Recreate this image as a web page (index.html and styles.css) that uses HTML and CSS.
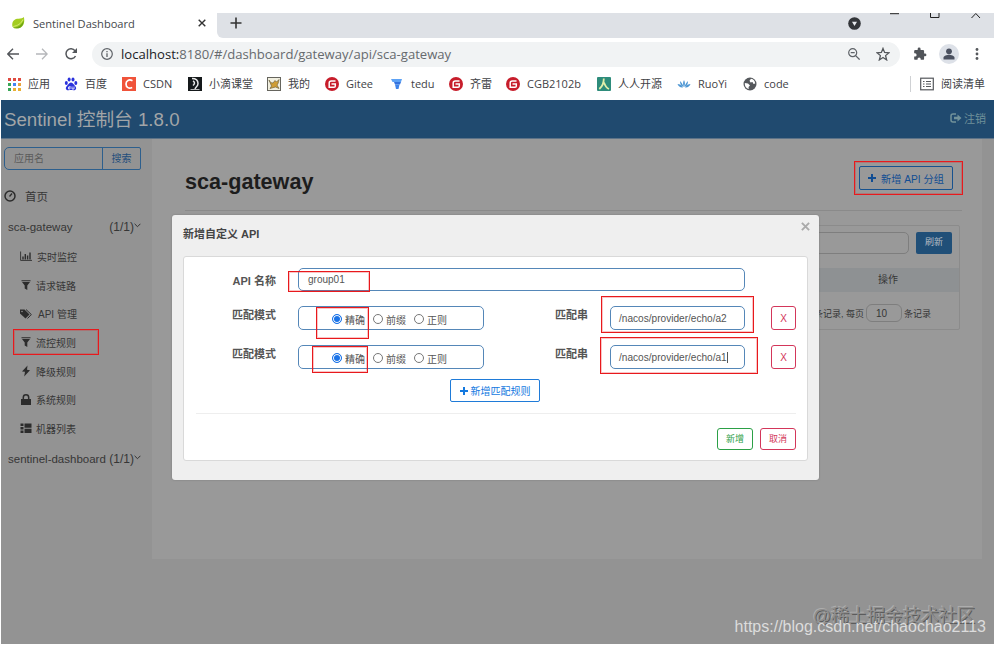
FILE: index.html
```html
<!DOCTYPE html>
<html lang="zh-CN">
<head>
  <meta charset="UTF-8" />
  <title>Sentinel Dashboard</title>
  <link rel="stylesheet" href="styles.css">
</head>
<body>
  <div class="browser">
    <div class="tab-strip">
      <div class="tab">
        <svg class="leaf" viewBox="0 0 16 16"><path d="M1 12C0 5 4 3 8 3c3 0 5-1 6-2 1 3 1 8-2 11-3 3-7 2-9 2z" fill="#a4cd20"/><path d="M2 13c5 0 9-2 12-8 0 5-3 9-7 9-2 0-4 0-5-1z" fill="#6ea514"/><path d="M2 12c5-1 9-3 11-8" stroke="#d8ef7c" fill="none"/></svg>
        <span class="tab-title">Sentinel Dashboard</span>
        <svg class="tab-close" viewBox="0 0 8 8"><path d="M.7.7l6.6 6.6M7.3.7L.7 7.3" stroke="#333" stroke-width="1.4"/></svg>
      </div>
      <div class="strip-rest">
        <svg class="new-tab" viewBox="0 0 12 12"><path d="M6 .5v11M.5 6h11" stroke="#333" stroke-width="1.6"/></svg>
        <svg class="tab-search" viewBox="0 0 13 13"><circle cx="6.5" cy="6.5" r="6.3" fill="#333539"/><path d="M4 4.8h5L6.5 9z" fill="#e8eaee"/></svg>
        <svg class="win-buttons" viewBox="0 0 94 6"><path d="M1 .7h9M41.5 0v4.5h8.500V0M82.500 5l4.300-4.500L91 5" fill="none" stroke="#222" stroke-width="1"/></svg>
      </div>
    </div>

    <div class="toolbar">
      <svg class="nav" viewBox="0 0 12 12"><path d="M12 6H1M6 .8L.8 6 6 11.200" fill="none" stroke="#53565a" stroke-width="1.400"/></svg>
      <svg class="nav" viewBox="0 0 12 12"><path d="M0 6h11M6 .8L11.200 6 6 11.200" fill="none" stroke="#b5b7ba" stroke-width="1.300"/></svg>
      <svg class="nav" viewBox="0 0 12 12"><path d="M10.500 8A5 5 0 1 1 10 2.700" fill="none" stroke="#53565a" stroke-width="1.500"/><path d="M12 0v5H7z" fill="#53565a"/></svg>
      <div class="omnibox">
        <svg class="info" viewBox="0 0 12 12"><circle cx="6" cy="6" r="5.300" fill="none" stroke="#5f6368" stroke-width="1.200"/><path d="M6 5.200V9M6 3v1.300" stroke="#5f6368" stroke-width="1.300"/></svg>
        <span class="url"><b>localhost:</b>8180/#/dashboard/gateway/api/sca-gateway</span>
        <svg class="zoom" viewBox="0 0 12 12"><circle cx="4.700" cy="4.700" r="4" fill="none" stroke="#5f6368" stroke-width="1.200"/><path d="M7.600 7.600l4 4M2.700 4.700h4" stroke="#5f6368" stroke-width="1.300"/></svg>
        <svg class="star" viewBox="0 0 13 13"><path d="M6.500 1.300l1.500 3.800 4 .3-3.100 2.600 1 4-3.400-2.200L3.100 12l1-4L1 5.400l4-.3z" fill="none" stroke="#55585c" stroke-width="1.200"/></svg>
      </div>
      <svg class="puzzle" viewBox="0 0 24 24"><path d="M20.500 11H19V7a2 2 0 0 0-2-2h-4V3.500a2.500 2.500 0 0 0-5 0V5H4a2 2 0 0 0-2 2v3.800h1.500a2.700 2.700 0 0 1 0 5.400H2V20a2 2 0 0 0 2 2h3.800v-1.500a2.700 2.700 0 0 1 5.400 0V22H17a2 2 0 0 0 2-2v-4h1.500a2.500 2.500 0 0 0 0-5z" fill="#515459"/></svg>
      <svg class="avatar" viewBox="0 0 20 20"><circle cx="10" cy="10" r="10" fill="#dde1e8"/><circle cx="10" cy="7.300" r="2.900" fill="#4b5160"/><path d="M4.500 15.500v-1.700c0-2 3.500-3 5.500-3s5.500 1 5.500 3v1.700z" fill="#4b5160"/></svg>
      <svg class="dots" viewBox="0 0 4 12"><g fill="#55585c"><circle cx="2" cy="1.500" r="1.400"/><circle cx="2" cy="6" r="1.400"/><circle cx="2" cy="10.500" r="1.400"/></g></svg>
    </div>

    <div class="bookmarks">
      <div class="bm"><svg viewBox="0 0 14 14"><g stroke-width="3" stroke-dasharray="3 2"><path d="M1 2.500h13" stroke="#e04a3f"/><path d="M1 7.500h3" stroke="#3aa757"/><path d="M6 7.500h3" stroke="#4285f4"/><path d="M11 7.500h3" stroke="#e8a33d"/><path d="M1 12.500h3" stroke="#3aa757"/><path d="M6 12.500h8" stroke="#eab035"/></g></svg><span>应用</span></div>
      <div class="bm"><svg viewBox="0 0 14 14"><g fill="#2b32dc"><ellipse cx="2.300" cy="6" rx="1.500" ry="2"/><ellipse cx="5.100" cy="2.500" rx="1.500" ry="2"/><ellipse cx="9" cy="2.500" rx="1.500" ry="2"/><ellipse cx="11.800" cy="6" rx="1.500" ry="2"/><path d="M7 5.500c2 0 3 2.500 4.500 4 1.500 2 .3 4-2 3.800-2-.3-3-.3-5 0-2.300.2-3.500-1.800-2-3.800C4 8 5 5.500 7 5.500z"/></g><path d="M6 9v3H4.500v-2H6M8 9.500V12h2V9.500" stroke="#fff" stroke-width=".8" fill="none"/></svg><span>百度</span></div>
      <div class="bm"><svg viewBox="0 0 14 14"><rect width="14" height="14" fill="#f0533a"/><path d="M10.500 3.700C7 2 4 3.500 4 7s3 5 6.200 3.500" fill="none" stroke="#fff" stroke-width="1.700"/></svg><span>CSDN</span></div>
      <div class="bm"><svg viewBox="0 0 14 14"><rect width="14" height="14" fill="#15191b"/><path d="M4 1.500c3 0 6 1 6 5 0 3-2 3-3 5.500M5 4c2 1 2 3 0 4.500" fill="none" stroke="#e9e9e9" stroke-width="1.500"/><path d="M2.500 12.500h9" stroke="#ddd" stroke-width=".8"/></svg><span>小滴课堂</span></div>
      <div class="bm"><svg viewBox="0 0 14 14"><rect x=".5" y=".5" width="13" height="13" fill="#f1efdf" stroke="#66655e"/><path d="M2 3c1 2 2 3 4 3l2-2.500L9.500 5l2.500-2.500c-.5 3-1 4.500-2 5.500l2 3.500-3.500-1.500L3 11.500 4.500 9z" fill="#cf9d35" stroke="#5f5635" stroke-width=".6"/></svg><span>我的</span></div>
      <div class="bm"><svg viewBox="0 0 14 14"><circle cx="7" cy="7" r="7" fill="#c71d2b"/><path d="M10.500 4H6.300Q4.200 4 4.200 6v4.200H9q1.300 0 1.300-1.300V7H6.500" fill="none" stroke="#fff" stroke-width="1.500"/></svg><span>Gitee</span></div>
      <div class="bm"><svg viewBox="0 0 14 14"><path d="M1 2h11L11 5H2.500z" fill="#5da2f5"/><path d="M4 5h7l-1 2.500H5z" fill="#3472dd"/><path d="M5 7.500h4.500L8.500 12H6z" fill="#3d83ea"/></svg><span>tedu</span></div>
      <div class="bm"><svg viewBox="0 0 14 14"><circle cx="7" cy="7" r="7" fill="#c71d2b"/><path d="M10.500 4H6.300Q4.200 4 4.200 6v4.200H9q1.300 0 1.300-1.300V7H6.500" fill="none" stroke="#fff" stroke-width="1.500"/></svg><span>齐雷</span></div>
      <div class="bm"><svg viewBox="0 0 14 14"><circle cx="7" cy="7" r="7" fill="#c71d2b"/><path d="M10.500 4H6.300Q4.200 4 4.200 6v4.200H9q1.300 0 1.300-1.300V7H6.500" fill="none" stroke="#fff" stroke-width="1.500"/></svg><span>CGB2102b</span></div>
      <div class="bm"><svg viewBox="0 0 14 14"><rect width="14" height="14" rx="1" fill="#2e8c7b"/><path d="M6.800 1.500c0 4.500-1.500 8-4.500 10.500M7 5.500c1 3 2.500 5.500 5 6.500" fill="none" stroke="#e1efaa" stroke-width="1.800"/></svg><span>人人开源</span></div>
      <div class="bm"><svg viewBox="0 0 14 14"><g fill="#4d96d3"><path d="M7 3c1.500 3 1 5 0 7-1-2-1.500-4 0-7zM3 4c2 2 3 4 3.500 6C4 9 3 7 3 4zM11 4c0 3-1 5-3.500 6C8 8 9 6 11 4zM.5 7c2 0 4 1 5.500 3.500C3.500 11 1.500 9.500.5 7zM13.500 7c-1 2.500-3 4-5.500 3.500C9.500 8 11.500 7 13.500 7z"/></g></svg><span>RuoYi</span></div>
      <div class="bm"><svg viewBox="0 0 14 14"><circle cx="7" cy="7" r="6.500" fill="#55585c"/><path d="M1.800 6l3.200.5 2 2-1.500 1.500.3 2C3 11.500 1.600 9 1.800 6zM8 1.800l-1.500 2 1 1.700 2-.5 1 2 1.700-.5C12 4 10.500 2.200 8 1.800z" fill="#fff"/></svg><span>code</span></div>
      <div class="bm reading"><svg viewBox="0 0 14 14"><rect x=".7" y="1.200" width="12.600" height="11.600" fill="none" stroke="#55585c" stroke-width="1.200"/><path d="M3 4.500h1.500M6 4.500h5M3 7h1.500M6 7h5M3 9.500h1.500M6 9.500h5" stroke="#55585c"/></svg><span>阅读清单</span></div>
    </div>

    <div class="app">
      <div class="app-header">
        <span class="brand">Sentinel 控制台 1.8.0</span>
        <span class="logout"><svg viewBox="0 0 12 10"><path d="M6 1H3Q1 1 1 3v4q0 2 2 2h3" fill="none" stroke="currentColor" stroke-width="1.500"/><path d="M4 3.700h3.500V1.500L11.500 5 7.500 8.500V6.300H4z" fill="currentColor"/></svg>注销</span>
      </div>

      <div class="app-body">
        <div class="sidebar">
          <div class="search"><span class="search-input">应用名</span><span class="search-button">搜索</span></div>
          <div class="home"><svg viewBox="0 0 12 12"><circle cx="6" cy="6" r="5" fill="none" stroke="#2c2c2c" stroke-width="1.500"/><path d="M5.500 6.500L8 3.500" stroke="#2c2c2c" stroke-width="1.300"/></svg>首页</div>
          <div class="app-name"><span>sca-gateway</span><span>(1/1)<svg viewBox="0 0 7 5"><path d="M.6.800L3.500 3.700 6.400.8" fill="none" stroke="#333"/></svg></span></div>
          <div class="menu">
            <div class="item"><svg viewBox="0 0 12 12"><path d="M.6 1.500V10.400H12" fill="none" stroke="#2c2c2c" stroke-width=".9"/><path d="M3 9.500V6.500M5.300 9.500V4M7.600 9.500V5.500M10 9.500V2.500" stroke="#2c2c2c" stroke-width="1.400"/></svg>实时监控</div>
            <div class="item filter"><svg viewBox="0 0 12 12"><path d="M1.500 1.200h9v1h-9zM2 3h8L7.300 6.500V11L4.700 9.500v-3z" fill="#2c2c2c"/></svg>请求链路</div>
            <div class="item tags"><svg viewBox="0 0 12 12"><path d="M0 1.500h4.500l5 5L5.500 10.500 0 5.500z" fill="#2c2c2c"/><circle cx="2" cy="3.500" r=".8" fill="#929292"/><path d="M6 1.500l5.300 5-3.800 4" fill="none" stroke="#2c2c2c"/></svg>API 管理</div>
            <div class="item filter"><svg viewBox="0 0 12 12"><path d="M1.500 1.200h9v1h-9zM2 3h8L7.300 6.500V11L4.700 9.500v-3z" fill="#2c2c2c"/></svg>流控规则<i class="mark mark-menu"></i></div>
            <div class="item filter"><svg viewBox="0 0 12 12"><path d="M7.500.5L2 6.500l3 .3L4.200 11.500 10 5.200l-3-.4z" fill="#2c2c2c"/></svg>降级规则</div>
            <div class="item filter"><svg viewBox="0 0 12 12"><path d="M1 5h10v6H1z" fill="#2c2c2c"/><path d="M3.300 5V3.500a2.700 2.700 0 0 1 5.400 0V5" fill="none" stroke="#2c2c2c" stroke-width="1.500"/></svg>系统规则</div>
            <div class="item filter"><svg viewBox="0 0 12 12"><path d="M.5 1.500h3v2.500h-3zM4.500 1.500h7v4.300h-7zM.5 5h3v2.500h-3zM.5 8.500h3V11h-3zM4.500 6.800h7V11h-7z" fill="#2c2c2c"/></svg>机器列表</div>
          </div>
          <div class="app-name"><span>sentinel-dashboard</span><span>(1/1)<svg viewBox="0 0 7 5"><path d="M.6.800L3.500 3.700 6.400.8" fill="none" stroke="#333"/></svg></span></div>
        </div>

        <div class="content">
          <div class="page-head">
            <h1>sca-gateway</h1>
            <div class="new-group"><svg viewBox="0 0 8 8"><path d="M4 0v8M0 4h8" stroke="currentColor" stroke-width="2"/></svg>新增 API 分组<i class="mark mark-group"></i></div>
          </div>
          <div class="table-card">
            <div class="card-tools"><span class="filter-input"></span><span class="refresh">刷新</span></div>
            <div class="thead">操作</div>
            <div class="pager">条记录, 每页 <span class="page-size">10</span> 条记录</div>
          </div>
        </div>
      </div>

      <div class="modal">
        <div class="modal-head"><span>新增自定义 API</span><svg class="modal-close" viewBox="0 0 8 8"><path d="M.8.800l6.400 6.400M7.200.8L.8 7.200" stroke="#aaa" stroke-width="1.700"/></svg></div>
        <div class="form">
          <div class="row name-row">
            <label>API 名称</label>
            <div class="field field-name">group01<i class="mark mark-name"></i></div>
          </div>
          <div class="row">
            <label>匹配模式</label>
            <div class="field radios"><i class="radio on"></i><span>精确</span><i class="radio"></i><span>前缀</span><i class="radio"></i><span>正则</span><i class="mark mark-mode1"></i></div>
            <label class="label-str">匹配串</label>
            <div class="field field-str">/nacos/provider/echo/a2<i class="mark mark-str1"></i></div>
            <span class="btn btn-x">X</span>
          </div>
          <div class="row">
            <label>匹配模式</label>
            <div class="field radios"><i class="radio on"></i><span>精确</span><i class="radio"></i><span>前缀</span><i class="radio"></i><span>正则</span><i class="mark mark-mode2"></i></div>
            <label class="label-str">匹配串</label>
            <div class="field field-str">/nacos/provider/echo/a1<i class="caret"></i><i class="mark mark-str2"></i></div>
            <span class="btn btn-x">X</span>
          </div>
          <div class="add-rule"><svg viewBox="0 0 8 8"><path d="M4 0v8M0 4h8" stroke="currentColor" stroke-width="2"/></svg>新增匹配规则</div>
          <div class="form-foot"><span class="btn btn-ok">新增</span><span class="btn btn-cancel">取消</span></div>
        </div>
      </div>

      <div class="watermark community">@稀土掘金技术社区</div>
      <div class="watermark blog">https://blog.csdn.net/chaochao2113</div>
    </div>
  </div>
</body>
</html>
```

FILE: styles.css
```css
* {
  box-sizing: border-box;
}

body {
  margin: 0;
  background: #fff;
  font-family: "Liberation Sans", "Noto Sans CJK SC", sans-serif;
  font-size: 10px;
  overflow: hidden;
}

svg {
  display: block;
  flex: none;
}

.browser {
  width: 993px;
  height: 644px;
  margin-left: 1px;
  padding-top: 13px;
  display: flex;
  flex-direction: column;
}

/* browser chrome */
.tab-strip {
  display: flex;
  height: 25px;
  flex: none;
}

.tab {
  width: 216px;
  display: flex;
  align-items: center;
  padding: 0 11px 5px 10px;
  font-family: "Open Sans", sans-serif;
  font-size: 11.1px;
  color: #45484c;
}

.leaf {
  width: 15px;
  height: 14px;
}

.tab-title {
  margin-left: 7px;
  flex: 1;
  white-space: nowrap;
}

.tab-close {
  width: 8px;
  height: 8px;
}

.strip-rest {
  flex: 1;
  display: flex;
  align-items: center;
  background: #dee1e6;
  border-bottom-left-radius: 6px;
  padding: 0 11px 5px 13px;
}

.new-tab {
  width: 12px;
  height: 12px;
}

.tab-search {
  width: 13px;
  height: 13px;
  margin-left: auto;
}

.win-buttons {
  width: 94px;
  height: 6px;
  align-self: flex-start;
  margin-left: 28px;
}

.toolbar {
  height: 33px;
  flex: none;
  display: flex;
  align-items: center;
  padding: 0 15px 1px 6px;
}

.nav {
  width: 12px;
  height: 12px;
  margin-right: 17px;
}

.omnibox {
  width: 808px;
  height: 25px;
  margin-left: -2px;
  border-radius: 13px;
  background: #f1f3f4;
  display: flex;
  align-items: center;
  padding: 0 10px 0 9px;
}

.info {
  width: 12px;
  height: 12px;
}

.url {
  flex: 1;
  margin-left: 8px;
  font-family: "Open Sans", sans-serif;
  font-size: 13.1px;
  color: #666a6e;
}

.url b {
  font-weight: normal;
  color: #202124;
}

.zoom {
  width: 12px;
  height: 12px;
  margin-right: 16px;
}

.star {
  width: 14px;
  height: 14px;
}

.puzzle {
  width: 14px;
  height: 14px;
  margin-left: 13px;
}

.avatar {
  width: 20px;
  height: 20px;
  margin-left: 12px;
}

.dots {
  width: 4px;
  height: 12px;
  margin-left: auto;
}

.bookmarks {
  height: 29px;
  flex: none;
  display: grid;
  grid-template-columns: 57px 58px 66px 79px 58px 65px 59px 57px 91px 80px 66px 1fr 84px;
  padding: 0 0 4px 6px;
  align-items: center;
}

.bm {
  display: flex;
  align-items: center;
  gap: 7px;
  font-family: "Open Sans", "Noto Sans CJK SC", sans-serif;
  font-size: 11px;
  line-height: 16px;
  color: #3f4246;
  white-space: nowrap;
}

.bm svg {
  width: 14px;
  height: 14px;
}

.reading {
  border-left: 1px solid #cfd1d4;
  padding-left: 9px;
}

/* dashboard behind the dialog */
.app {
  flex: 1;
  position: relative;
  display: flex;
  flex-direction: column;
  background: #939393;
}

.app-header {
  height: 39px;
  flex: none;
  display: flex;
  justify-content: space-between;
  align-items: center;
  padding: 0 8px 3px 3px;
  background: #204a6f;
  border-bottom: 1px solid #5d7388;
}

.brand {
  font-size: 18.7px;
  color: #a2a5a7;
}

.logout {
  display: flex;
  align-items: center;
  gap: 2px;
  font-size: 11px;
  color: #71929a;
}

.logout svg {
  width: 12px;
  height: 10px;
}

.app-body {
  flex: 1;
  display: flex;
}

.sidebar {
  width: 151px;
  padding: 8px 11px 0 3px;
  color: #363636;
}

.search {
  display: flex;
  height: 23px;
  border: 1px solid #2d5f8d;
  border-radius: 5px 2px 2px 5px;
  line-height: 22px;
}

.search-input {
  width: 97px;
  padding-left: 9px;
  color: #5b5b5b;
}

.search-button {
  flex: 1;
  border-left: 1px solid #2d5f8d;
  text-align: center;
  color: #1f4e7c;
}

.home {
  display: flex;
  align-items: center;
  height: 20px;
  margin-top: 16px;
  gap: 9px;
  font-size: 11.5px;
}

.home svg {
  width: 12px;
  height: 12px;
}

.app-name {
  display: flex;
  justify-content: space-between;
  height: 20px;
  margin-top: 11px;
  padding-left: 4px;
  line-height: 20px;
  font-size: 11.5px;
  white-space: nowrap;
}

.app-name svg {
  display: inline-block;
  width: 7px;
  height: 5px;
  vertical-align: 3px;
}

.app-name span + span {
  font-size: 12px;
}

.menu {
  margin-top: 5px;
}

.item {
  position: relative;
  display: flex;
  align-items: center;
  height: 28.7px;
  padding-left: 16px;
  gap: 5px;
}

.item svg {
  width: 12px;
  height: 12px;
}

.filter {
  gap: 4px;
}

.tags {
  gap: 6px;
}

.menu + .app-name {
  margin-top: 6px;
}

.content {
  width: 830px;
  height: 420px;
  padding: 22px 20px 0 33px;
  background: #999;
}

.page-head {
  display: flex;
  justify-content: space-between;
  height: 50px;
  border-bottom: 1px solid #8a8a8a;
  padding: 5px 9px 0 0;
}

h1 {
  margin: 0;
  font-size: 21.6px;
  line-height: 32px;
  color: #1d1d1d;
}

.new-group {
  position: relative;
  width: 94px;
  height: 24px;
  border: 1px solid #17528f;
  border-radius: 2px;
  display: flex;
  align-items: center;
  justify-content: center;
  gap: 5px;
  font-size: 10.2px;
  color: #114d93;
}

.new-group svg,
.add-rule svg {
  width: 8px;
  height: 8px;
}

.table-card {
  height: 105px;
  margin: 14px 2px 0 0;
  border: 1px solid #8b8b8b;
  border-radius: 2px;
}

.card-tools {
  display: flex;
  justify-content: flex-end;
  height: 42px;
  padding: 6px 7px 0 0;
  gap: 7px;
}

.filter-input {
  width: 180px;
  height: 22px;
  border: 1px solid #7e7e7e;
  border-radius: 5px;
}

.refresh {
  width: 36px;
  height: 22px;
  border-radius: 2px;
  background: #204f78;
  color: #b5bcc3;
  font-size: 9px;
  line-height: 21px;
  text-align: center;
}

.thead {
  height: 24px;
  padding-right: 61px;
  background: #8e9193;
  color: #363636;
  line-height: 24px;
  text-align: right;
}

.pager {
  display: flex;
  align-items: center;
  justify-content: flex-end;
  height: 42px;
  padding-right: 28px;
  gap: 2px;
  font-size: 9px;
  color: #363636;
}

.page-size {
  width: 36px;
  height: 18px;
  border: 1px solid #7e7e7e;
  border-radius: 6px;
  padding-left: 9px;
  font-size: 10px;
  line-height: 17px;
}

/* dialog */
.modal {
  position: absolute;
  left: 171px;
  top: 115px;
  width: 647px;
  height: 265px;
  padding: 0 11px 0 11px;
  background: #efefef;
  border-radius: 3px;
  box-shadow: 0 0 2px #777;
  color: #555;
}

.modal-head {
  display: flex;
  justify-content: space-between;
  height: 41px;
  padding-top: 10px;
  font-size: 11px;
  font-weight: bold;
  line-height: 18px;
  color: #444;
}

.modal-close {
  width: 9px;
  height: 9px;
  margin: -3px -2px 0 0;
}

.form {
  height: 205px;
  padding: 11px 11px 0 12px;
  border: 1px solid #d9d9d9;
  border-radius: 3px;
  background: #fff;
}

.row {
  display: flex;
  height: 24px;
  margin-bottom: 15px;
}

.name-row {
  margin-bottom: 14px;
}

label {
  width: 80px;
  margin-right: 22px;
  text-align: right;
  font-size: 11px;
  font-weight: bold;
  line-height: 18px;
}

.name-row label {
  line-height: 27px;
}

.field {
  position: relative;
  height: 24px;
  border: 1px solid #5587b8;
  border-radius: 5px;
}

.field-name {
  width: 447px;
  height: 23px;
  padding-left: 9px;
  line-height: 22px;
}

.radios {
  width: 186px;
  display: flex;
  align-items: center;
  padding: 3px 0 0 32px;
}

.radios span {
  margin: 0 8px 0 3px;
}

.radio {
  width: 10px;
  height: 10px;
  margin-top: -2px;
  border: 1px solid #777;
  border-radius: 50%;
  flex: none;
}

.radio.on {
  margin-left: 1px;
  border-color: #1a73e8;
  background: #1a73e8;
  box-shadow: inset 0 0 0 1px #fff;
}

.label-str {
  width: 104px;
}

.field-str {
  width: 135px;
  padding-left: 8px;
  font-size: 10.1px;
  line-height: 23px;
  white-space: nowrap;
}

.caret {
  display: inline-block;
  width: 1px;
  height: 11px;
  background: #555;
  vertical-align: -2px;
}

.btn {
  border: 1px solid;
  border-radius: 3px;
  text-align: center;
}

.btn-x {
  width: 25px;
  height: 24px;
  margin-left: 26px;
  line-height: 24px;
  color: #d3365a;
}

.add-rule {
  width: 90px;
  height: 23px;
  margin: -5px auto 0 254px;
  display: flex;
  align-items: center;
  justify-content: center;
  gap: 3px;
  border: 1px solid #1f7bd8;
  border-radius: 2px;
  color: #1479df;
}

.form-foot {
  display: flex;
  justify-content: flex-end;
  gap: 7px;
  margin-top: 11px;
  padding-top: 14px;
  border-top: 1px solid #eee;
}

.btn-ok,
.btn-cancel {
  width: 36px;
  height: 22px;
  font-size: 9px;
  line-height: 20px;
}

.btn-ok {
  color: #2ba046;
}

.btn-cancel {
  color: #d3365a;
}

/* red highlight frames */
.mark {
  position: absolute;
  border: 1.5px solid #e8191c;
  outline: 1px solid rgba(232, 25, 28, 0.25);
  outline-offset: -2px;
}

.mark-menu {
  left: 9px;
  top: 1px;
  width: 86px;
  height: 26px;
}

.mark-group {
  left: -6px;
  top: -6px;
  width: 109px;
  height: 34px;
}

.mark-name {
  left: -11px;
  top: 2px;
  width: 82px;
  height: 21px;
}

.mark-mode1 {
  left: 17px;
  top: 0;
  width: 53px;
  height: 32px;
}

.mark-mode2 {
  left: 13px;
  top: 0;
  width: 56px;
  height: 27px;
}

.mark-str1 {
  left: -10px;
  top: -11px;
  width: 153px;
  height: 37px;
}

.mark-str2 {
  left: -11px;
  top: -9px;
  width: 158px;
  height: 37px;
}

.watermark {
  position: absolute;
  white-space: nowrap;
}

.community {
  right: 19px;
  bottom: 15px;
  font-size: 18px;
  line-height: 26px;
  color: #8e8e8e;
  text-shadow: 1px 1px 0 #5c5c5c, -1px -1px 0 #adadad;
}

.blog {
  right: 8px;
  bottom: 7px;
  font-size: 16px;
  line-height: 20px;
  color: #dcdcdc;
}
```
